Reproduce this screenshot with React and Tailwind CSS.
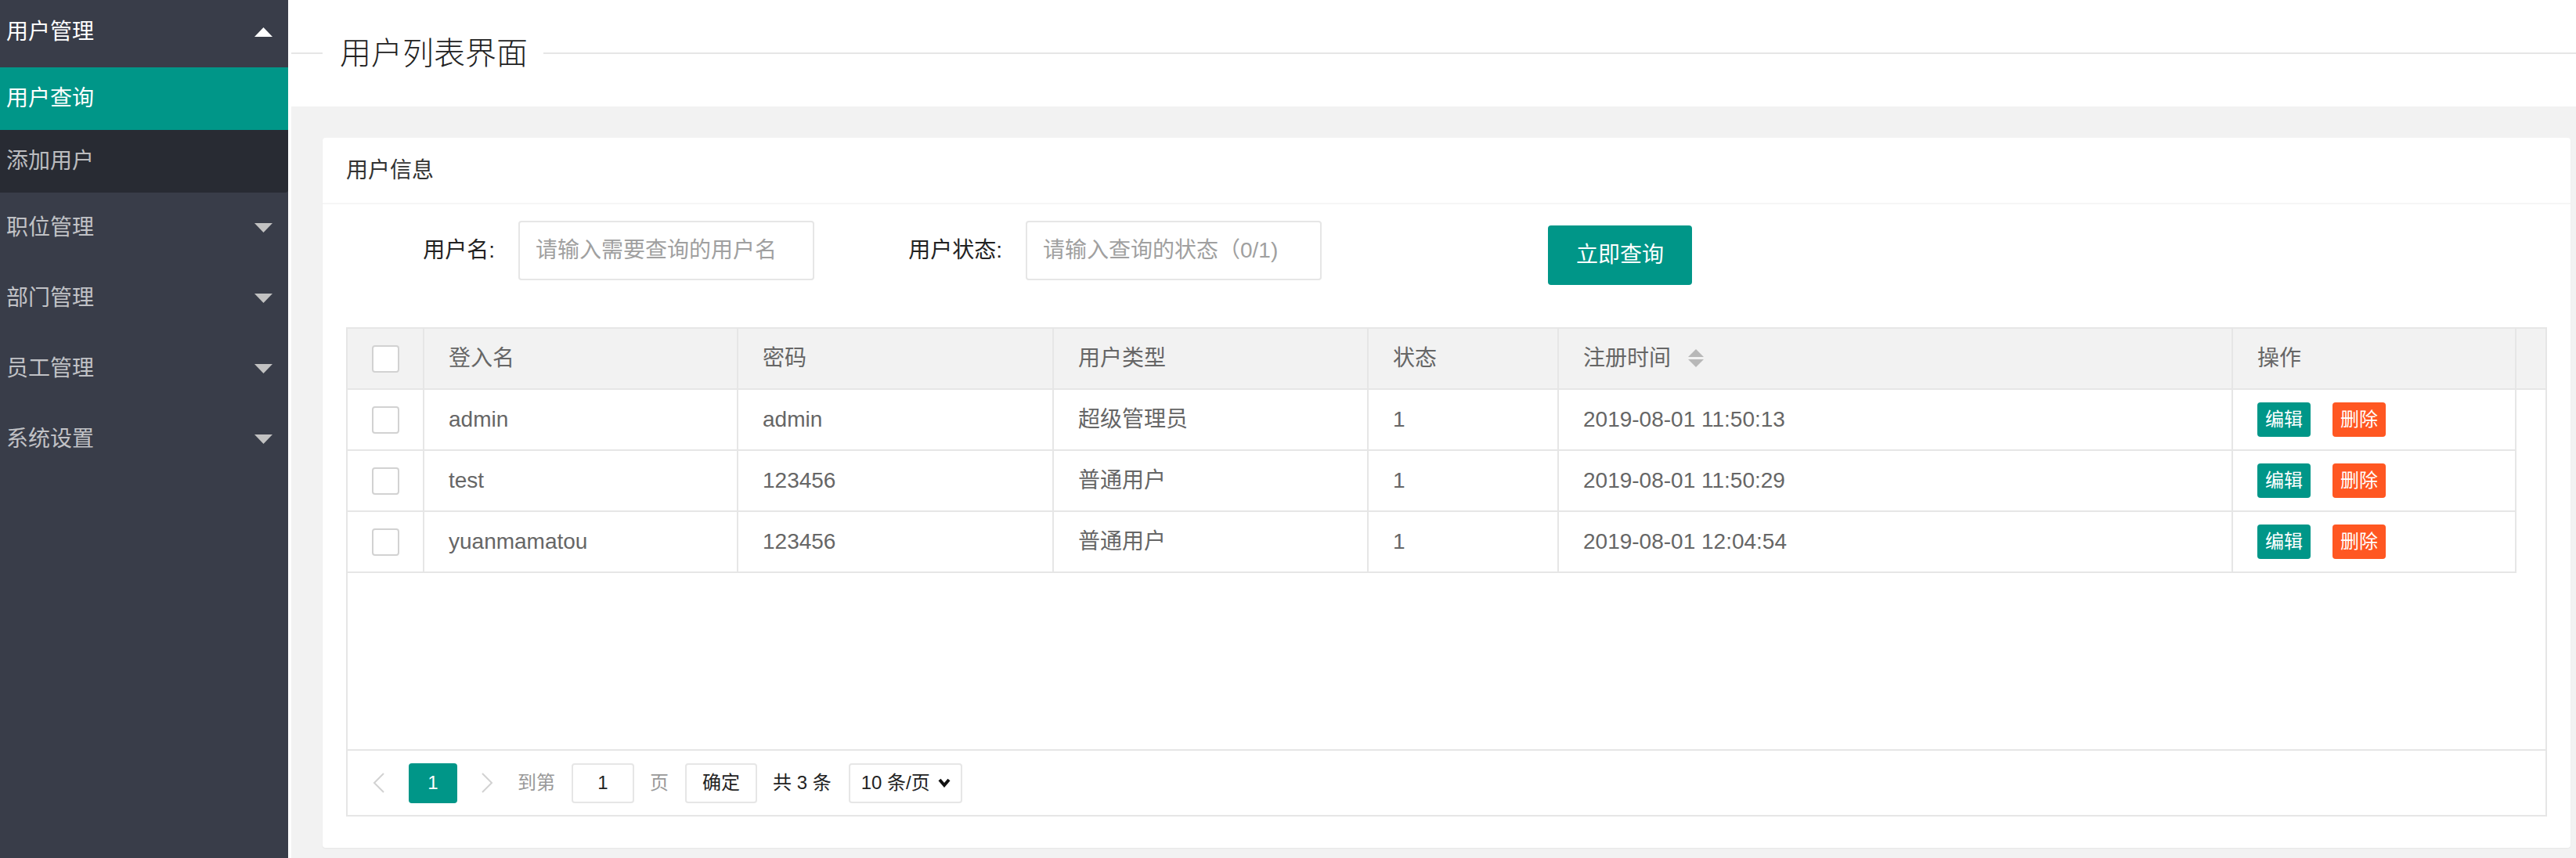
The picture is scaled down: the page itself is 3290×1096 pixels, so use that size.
import React from "react";

function Tri({ up, className }) {
  return (
    <svg width="23" height="12" viewBox="0 0 23 12" className={className}>
      {up ? (
        <polygon points="11.5,0 23,12 0,12" fill="currentColor" />
      ) : (
        <polygon points="0,0 23,0 11.5,12" fill="currentColor" />
      )}
    </svg>
  );
}

function SortIcon() {
  return (
    <svg width="20" height="24" viewBox="0 0 20 24" className="ml-[22px]">
      <polygon points="10,0 20,10 0,10" fill="#b8b8b8" />
      <polygon points="0,13 20,13 10,23" fill="#b8b8b8" />
    </svg>
  );
}

function Checkbox() {
  return <div className="w-[35px] h-[35px] border-2 border-[#d2d2d2] rounded-[4px] bg-white" />;
}

const cols = "grid grid-cols-[98px_401px_403px_402px_243px_861px_362px]";

const rows = [
  ["admin", "admin", "超级管理员", "1", "2019-08-01 11:50:13"],
  ["test", "123456", "普通用户", "1", "2019-08-01 11:50:29"],
  ["yuanmamatou", "123456", "普通用户", "1", "2019-08-01 12:04:54"],
];

function Cell({ children, last }) {
  return (
    <div className={"flex items-center pl-[31px] border-r-2 border-[#e6e6e6] " + (last ? "" : "")}>
      {children}
    </div>
  );
}

export default function App() {
  return (
    <div className="flex w-full h-screen overflow-hidden font-['Liberation_Sans','Noto_Sans_CJK_SC',sans-serif]">
      {/* Sidebar */}
      <aside className="w-[368px] shrink-0 bg-[#393D49] text-[28px]">
        <div className="h-[86px] pb-[4px] flex items-center justify-between pl-[8px] pr-[20px] text-white">
          <span>用户管理</span>
          <Tri up className="text-white" />
        </div>
        <div className="h-[80px] flex items-center pl-[8px] bg-[#009688] text-white">用户查询</div>
        <div className="h-[80px] flex items-center pl-[8px] bg-[#282B33] text-white/70 rounded-br-[4px]">添加用户</div>
        {["职位管理", "部门管理", "员工管理", "系统设置"].map((t) => (
          <div key={t} className="h-[90px] flex items-center justify-between pl-[8px] pr-[20px] text-white/70">
            <span>{t}</span>
            <Tri className="text-[#c2c2c2]" />
          </div>
        ))}
      </aside>

      {/* Main */}
      <main className="flex-1 flex flex-col bg-white pl-[4px] min-w-0">
        <div className="h-[136px] shrink-0 flex items-center">
          <div className="w-[40px] h-[2px] bg-[#e6e6e6]" />
          <span className="pl-[22px] pr-[20px] text-[40px] font-light text-[#222] leading-none">用户列表界面</span>
          <div className="flex-1 h-[2px] bg-[#e6e6e6]" />
        </div>

        <div className="flex-1 bg-[#f2f2f2] pt-[40px] pl-[40px] pr-[7px]">
          <div className="bg-white rounded-[4px] shadow-[0_1px_2px_0_rgba(0,0,0,0.05)]">
            <div className="h-[85px] border-b-2 border-[#f6f6f6] flex items-center pl-[30px] text-[28px] text-[#333]">
              用户信息
            </div>
            <div className="px-[30px] pb-[40px]">
              {/* Form */}
              <div className="flex items-start pt-[21px] pl-[60px] text-[28px]">
                <div className="w-[160px] h-[76px] pr-[30px] flex items-center justify-end text-[#222]">用户名:</div>
                <input
                  className="w-[378px] h-[76px] border-2 border-[#e6e6e6] rounded-[4px] pl-[20px] outline-none placeholder:text-[#a0a0a0]"
                  placeholder="请输入需要查询的用户名"
                />
                <div className="ml-[110px] w-[160px] h-[76px] pr-[30px] flex items-center justify-end text-[#222]">用户状态:</div>
                <input
                  className="w-[378px] h-[76px] border-2 border-[#e6e6e6] rounded-[4px] pl-[20px] outline-none placeholder:text-[#a0a0a0]"
                  placeholder="请输入查询的状态（0/1)"
                />
                <button className="ml-[289px] mt-[6px] w-[184px] h-[76px] bg-[#009688] rounded-[4px] text-white text-[28px]">
                  立即查询
                </button>
              </div>

              {/* Table */}
              <div className="mt-[54px] border-2 border-[#e6e6e6] text-[28px] text-[#666]">
                <div className="flex h-[78px] bg-[#f2f2f2] border-b-2 border-[#e6e6e6]">
                  <div className={cols + " h-full"}>
                    <div className="flex items-center justify-center border-r-2 border-[#e6e6e6]">
                      <Checkbox />
                    </div>
                    <Cell>登入名</Cell>
                    <Cell>密码</Cell>
                    <Cell>用户类型</Cell>
                    <Cell>状态</Cell>
                    <Cell>
                      注册时间
                      <SortIcon />
                    </Cell>
                    <Cell>操作</Cell>
                  </div>
                  <div className="flex-1" />
                </div>

                <div className="h-[234px]">
                  {rows.map((r, i) => (
                    <div key={i} className={cols + " h-[78px] border-b-2 border-[#e6e6e6] w-[2770px]"}>
                      <div className="flex items-center justify-center border-r-2 border-[#e6e6e6]">
                        <Checkbox />
                      </div>
                      {r.map((v, j) => (
                        <Cell key={j}>{v}</Cell>
                      ))}
                      <div className="flex items-center pl-[31px] gap-[28px] border-r-2 border-[#e6e6e6]">
                        <span className="w-[68px] h-[44px] rounded-[4px] bg-[#009688] text-white text-[24px] flex items-center justify-center">
                          编辑
                        </span>
                        <span className="w-[68px] h-[44px] rounded-[4px] bg-[#FF5722] text-white text-[24px] flex items-center justify-center">
                          删除
                        </span>
                      </div>
                    </div>
                  ))}
                </div>

                <div className="h-[225px]" />

                {/* Pagination */}
                <div className="h-[84px] border-t-2 border-[#e6e6e6] flex items-center pl-[31px] text-[24px]">
                  <svg width="17" height="26" viewBox="0 0 17 26">
                    <polyline points="15,1 3,13 15,25" fill="none" stroke="#d2d2d2" strokeWidth="2" />
                  </svg>
                  <div className="ml-[30px] w-[62px] h-[51px] bg-[#009688] rounded-[4px] text-white flex items-center justify-center">
                    1
                  </div>
                  <svg width="17" height="26" viewBox="0 0 17 26" className="ml-[30px]">
                    <polyline points="2,1 14,13 2,25" fill="none" stroke="#d2d2d2" strokeWidth="2" />
                  </svg>
                  <span className="ml-[30px] text-[#999]">到第</span>
                  <div className="ml-[21px] w-[80px] h-[51px] border-2 border-[#e6e6e6] rounded-[4px] flex items-center justify-center text-[#222]">
                    1
                  </div>
                  <span className="ml-[20px] text-[#999]">页</span>
                  <div className="ml-[21px] w-[92px] h-[51px] border-2 border-[#e6e6e6] rounded-[4px] flex items-center justify-center text-[#222]">
                    确定
                  </div>
                  <span className="ml-[20px] text-[#222]">共 3 条</span>
                  <div className="ml-[22px] w-[145px] h-[51px] border-2 border-[#e6e6e6] rounded-[4px] flex items-center pl-[14px] text-[#222]">
                    <span>10 条/页</span>
                    <svg width="16" height="12" viewBox="0 0 16 12" className="ml-[10px]">
                      <polyline points="2,2 8,9 14,2" fill="none" stroke="#111" strokeWidth="4" />
                    </svg>
                  </div>
                </div>
              </div>
            </div>
          </div>
        </div>
      </main>
    </div>
  );
}
